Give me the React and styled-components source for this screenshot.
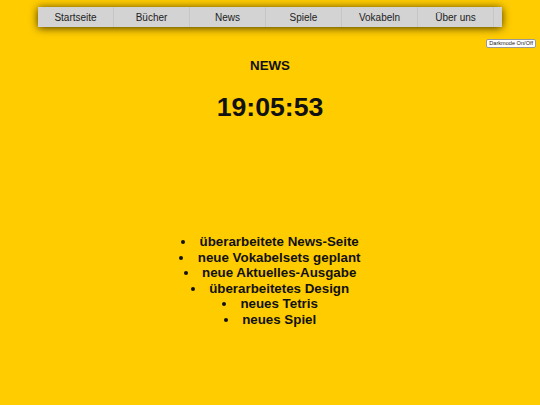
import React from "react";
import styled, { createGlobalStyle } from "styled-components";

const Global = createGlobalStyle`
  html, body { margin: 0; padding: 0; background: #ffcc00; }
  body { font-family: "Liberation Sans", Arial, sans-serif; color: #111; }
`;

const Page = styled.div`
  min-height: 405px;
  display: flex;
  flex-direction: column;
`;

const Nav = styled.nav`
  margin: 7px auto 0;
  width: 464px;
  height: 20px;
  display: flex;
  background: #d3d3d3;
  box-shadow: 0 1px 8px rgba(0, 0, 0, 0.75);
  box-sizing: border-box;
  padding-right: 8px;
`;

const NavItem = styled.a`
  width: 76px;
  box-sizing: border-box;
  border-right: 1px solid #c6c6c6;
  display: flex;
  align-items: center;
  justify-content: center;
  font-size: 10px;
  color: #222;
  text-decoration: none;
`;

const ToolRow = styled.div`
  display: flex;
  justify-content: flex-end;
  padding: 12px 4px 0 0;
`;

const ModeButton = styled.button`
  font-family: "Liberation Sans", Arial, sans-serif;
  font-size: 5.6px;
  height: 9px;
  line-height: 7px;
  padding: 0 2px;
  background: #fff;
  color: #222;
  border: 1px solid #999;
  border-radius: 2px;
`;

const Heading = styled.h1`
  margin: 10px 0 0;
  text-align: center;
  font-size: 13.33px;
  font-weight: bold;
`;

const Clock = styled.div`
  margin-top: 19px;
  text-align: center;
  font-size: 26.67px;
  font-weight: bold;
`;

const NewsList = styled.ul`
  margin: 111px 0 0;
  padding: 0;
  list-style: disc inside;
  text-align: center;
  font-size: 13.33px;
  font-weight: bold;
  line-height: 15.5px;
`;

const items = [
  "überarbeitete News-Seite",
  "neue Vokabelsets geplant",
  "neue Aktuelles-Ausgabe",
  "überarbeitetes Design",
  "neues Tetris",
  "neues Spiel",
];

export default function App() {
  return (
    <Page>
      <Global />
      <Nav>
        {["Startseite", "Bücher", "News", "Spiele", "Vokabeln", "Über uns"].map((n) => (
          <NavItem key={n} href="#">{n}</NavItem>
        ))}
      </Nav>
      <ToolRow>
        <ModeButton>Darkmode On/Off</ModeButton>
      </ToolRow>
      <Heading>NEWS</Heading>
      <Clock>19:05:53</Clock>
      <NewsList>
        {items.map((i) => (
          <li key={i}>{i}</li>
        ))}
      </NewsList>
    </Page>
  );
}
